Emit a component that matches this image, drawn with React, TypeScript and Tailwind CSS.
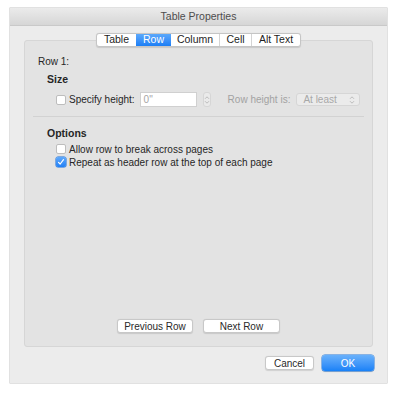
import type { ReactNode } from "react";

const font = { fontFamily: '"Liberation Sans", Arial, sans-serif' };

function Checkbox({ checked = false }: { checked?: boolean }) {
  if (checked) {
    return (
      <span className="flex h-[10px] w-[10px] items-center justify-center rounded-[2px] bg-gradient-to-b from-[#5fa9fb] to-[#1f80f6] shadow-[0_0_0_0.5px_#1a6fd8]">
        <svg width="8" height="8" viewBox="0 0 8 8">
          <path d="M1.5 4.3 L3.2 6 L6.5 1.7" fill="none" stroke="#fff" strokeWidth="1.2" strokeLinecap="round" strokeLinejoin="round" />
        </svg>
      </span>
    );
  }
  return <span className="h-[10px] w-[10px] rounded-[2px] border border-[#bdbdbd] bg-white" />;
}

function Stepper() {
  return (
    <svg width="6" height="10" viewBox="0 0 6 10">
      <path d="M1 3.8 L3 1.8 L5 3.8 M1 6.2 L3 8.2 L5 6.2" fill="none" stroke="#b5b5b5" strokeWidth="0.9" />
    </svg>
  );
}

function PushButton({ children, width }: { children: ReactNode; width: string }) {
  return (
    <button
      className={`flex h-[14px] items-center justify-center rounded-[3px] border border-[#c8c8c8] bg-white text-[10px] text-[#2a2a2a] shadow-[0_0.5px_1px_rgba(0,0,0,0.12)] ${width}`}
    >
      {children}
    </button>
  );
}

const tabs = [
  { label: "Table", w: "w-[39px]" },
  { label: "Row", w: "w-[35px]" },
  { label: "Column", w: "w-[48px]" },
  { label: "Cell", w: "w-[32px]" },
  { label: "Alt Text", w: "w-[49px]" },
];

export default function App() {
  return (
    <div className="h-[395px] w-[399px] bg-white pl-[10px] pt-[8px]" style={font}>
      <div className="flex h-[375px] w-[377px] flex-col bg-[#ececec] shadow-[0_0_0_0.5px_#c4c4c4]">
        <div className="flex h-[18px] items-center justify-center border-b border-[#c9c9c9] bg-gradient-to-b from-[#ebebeb] to-[#d6d6d6] text-[10.5px] text-[#4d4d4d]">
          Table Properties
        </div>

        <div className="relative z-10 mt-[7px] flex justify-center">
          <div className="flex h-[14px] overflow-hidden rounded-[3px] border border-[#c5c5c5] bg-white text-[10.5px] text-[#1e1e1e] shadow-[0_0.5px_1px_rgba(0,0,0,0.12)]">
            {tabs.map((t, i) => (
              <div
                key={t.label}
                className={`flex items-center justify-center ${t.w} ${
                  t.label === "Row"
                    ? "bg-gradient-to-b from-[#5ba8fb] to-[#1a7ef6] text-white"
                    : ""
                } ${i > 0 && t.label !== "Row" && tabs[i - 1].label !== "Row" ? "border-l border-[#d4d4d4]" : ""}`}
              >
                {t.label}
              </div>
            ))}
          </div>
        </div>

        <div className="mx-[14px] -mt-[7px] flex h-[307px] flex-col rounded-[3px] border border-[#d6d6d6] bg-[#e3e3e3] text-[10px] text-[#262626]">
          <div className="ml-[13px] mt-[15px] leading-[12px]">Row 1:</div>
          <div className="ml-[22px] mt-[5px] text-[10.5px] font-bold leading-[12px]">Size</div>

          <div className="ml-[31px] mt-[7px] flex h-[15px] items-center">
            <Checkbox />
            <span className="ml-[3px]">Specify height:</span>
            <div className="ml-[5px] flex h-[15px] w-[57px] items-center border border-[#d0d0d0] bg-white pl-[3px] text-[#a6a6a6]">
              0"
            </div>
            <div className="ml-[6px] flex h-[15px] w-[8px] items-center justify-center rounded-[3px] border border-[#d6d6d6] bg-[#eaeaea]">
              <Stepper />
            </div>
            <span className="ml-[17px] text-[#a2a2a2]">Row height is:</span>
            <div className="ml-[6px] flex h-[13px] w-[64px] items-center justify-between rounded-[3px] border border-[#d6d6d6] bg-[#ebebeb] pl-[6px] pr-[4px] text-[#a8a8a8]">
              <span>At least</span>
              <Stepper />
            </div>
          </div>

          <div className="mx-[8px] mt-[9px] h-px bg-[#d2d2d2]" />

          <div className="ml-[22px] mt-[10px] text-[10.5px] font-bold leading-[12px]">Options</div>
          <div className="ml-[31px] mt-[4px] flex h-[12px] items-center">
            <Checkbox />
            <span className="ml-[3px]">Allow row to break across pages</span>
          </div>
          <div className="ml-[31px] mt-[1px] flex h-[12px] items-center">
            <Checkbox checked />
            <span className="ml-[3px]">Repeat as header row at the top of each page</span>
          </div>

          <div className="mt-auto mb-[13px] ml-[92px] flex gap-[10px]">
            <PushButton width="w-[76px]">Previous Row</PushButton>
            <PushButton width="w-[77px]">Next Row</PushButton>
          </div>
        </div>

        <div className="mr-[13px] mt-[8px] flex items-center justify-end gap-[8px]">
          <PushButton width="w-[49px]">Cancel</PushButton>
          <button className="flex h-[16px] w-[52px] items-center justify-center rounded-[3px] bg-gradient-to-b from-[#69b1fb] to-[#1681f7] text-[10px] text-white shadow-[0_0_0_0.5px_#2a7ee0,0_0.5px_1px_rgba(0,0,0,0.2)]">
            OK
          </button>
        </div>
      </div>
    </div>
  );
}
